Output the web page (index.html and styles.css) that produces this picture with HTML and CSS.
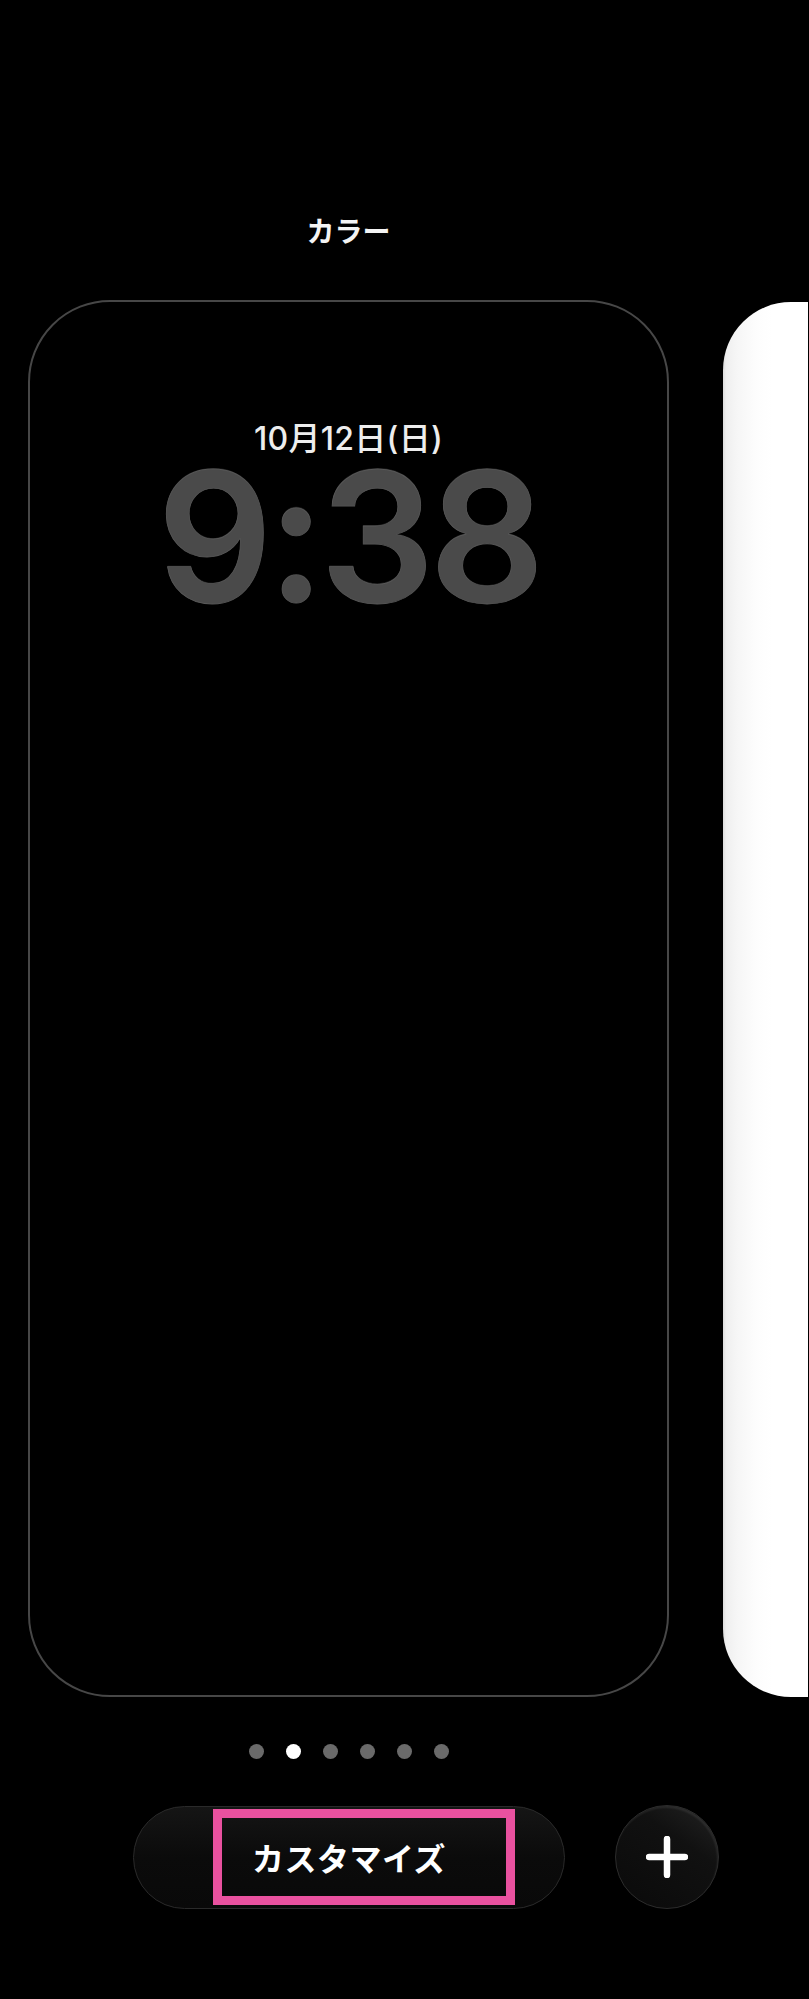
FILE: index.html
```html
<!DOCTYPE html>
<html lang="ja">
<head>
<meta charset="utf-8">
<title>カラー</title>
<link rel="stylesheet" href="styles.css">
</head>
<body>
<main class="screen">
  <div class="carousel">
    <h1 class="title">カラー</h1>
    <section class="card">
      <div class="date">10月12日(日)</div>
      <div class="time">9:38</div>
    </section>
    <div class="peek"></div>
  </div>
  <div class="dots">
    <span class="dot"></span>
    <span class="dot active"></span>
    <span class="dot"></span>
    <span class="dot"></span>
    <span class="dot"></span>
    <span class="dot"></span>
  </div>
  <div class="actions">
    <button class="pill">
      <span class="label">カスタマイズ</span>
      <span class="mark"></span>
    </button>
    <button class="plus" aria-label="追加">
      <svg width="42" height="42" viewBox="0 0 42 42"><path d="M21 3V39M3 21H39" stroke="#fff" stroke-width="6.5" stroke-linecap="round" fill="none"/></svg>
    </button>
  </div>
</main>
</body>
</html>
```

FILE: styles.css
```css
html, body {
  margin: 0;
  background: #000;
}
.screen {
  box-sizing: border-box;
  height: 1999px;
  padding: 213px 0 0 28px;
  font-family: "Inter", "Noto Sans CJK JP", sans-serif;
  color: #fff;
  overflow: hidden;
}
.carousel {
  display: grid;
  grid-template-columns: 641px 1fr;
  column-gap: 54px;
  row-gap: 53px;
}
.title {
  grid-column: 1;
  grid-row: 1;
  margin: 0;
  text-align: center;
  font-family: "Noto Sans CJK JP", sans-serif;
  font-size: 28px;
  line-height: 34px;
  font-weight: 700;
  color: #f4f4f4;
}
.card {
  grid-column: 1;
  grid-row: 2;
  box-sizing: border-box;
  height: 1397px;
  border: 2.5px solid #474747;
  border-radius: 82px;
  padding-top: 118px;
  display: flex;
  flex-direction: column;
  align-items: center;
}
.date {
  font-size: 32px;
  line-height: 38px;
  font-weight: 500;
  color: #ededed;
  letter-spacing: 0.3px;
}
.time {
  margin-top: 4px;
  font-size: 180px;
  line-height: 150px;
  font-weight: 600;
  letter-spacing: -5px;
  color: #4a4a4a;
  text-shadow: 0 -1px 0 rgba(255,255,255,0.12), 0 1px 1px rgba(0,0,0,0.6);
  -webkit-text-stroke: 0.8px #575757;
}
.peek {
  grid-column: 2;
  grid-row: 2;
  height: 1395px;
  margin-top: 2px;
  margin-right: 1px;
  border-radius: 68px 0 0 68px;
  background: linear-gradient(90deg, #dcdcdc 0, #efefef 3px, #f6f6f6 14px, #fdfdfd 34px, #fff 50px);
}
.dots {
  width: 641px;
  margin-top: 47px;
  display: flex;
  justify-content: center;
  gap: 22px;
}
.dot {
  width: 15px;
  height: 15px;
  border-radius: 50%;
  background: #6a6a6a;
}
.dot.active {
  background: #fff;
}
.actions {
  margin-top: 46px;
  margin-left: 105px;
  display: flex;
  align-items: center;
  gap: 50px;
}
.pill {
  position: relative;
  box-sizing: border-box;
  width: 432px;
  height: 103px;
  border-radius: 52px;
  border: 1.5px solid #2a2a2a;
  background: linear-gradient(180deg, #151515 0, #0b0b0b 50%, #090909 100%);
  display: flex;
  align-items: center;
  justify-content: center;
  padding: 0;
  cursor: pointer;
}
.label {
  font-family: "Noto Sans CJK JP", sans-serif;
  font-size: 32px;
  line-height: 40px;
  font-weight: 700;
  color: #fff;
  letter-spacing: 0.5px;
}
.mark {
  position: absolute;
  left: 78.5px;
  top: 2.5px;
  width: 302px;
  height: 96px;
  box-sizing: border-box;
  border: 9px solid #e9519f;
}
.plus {
  box-sizing: border-box;
  width: 104px;
  height: 104px;
  border-radius: 50%;
  border: 1.5px solid #2c2c2c;
  background: linear-gradient(215deg, #232323 0, #111 35%, #0a0a0a 100%);
  box-shadow: inset -1px 2px 2px rgba(255,255,255,0.08);
  display: flex;
  align-items: center;
  justify-content: center;
  padding: 0;
  cursor: pointer;
}
```
